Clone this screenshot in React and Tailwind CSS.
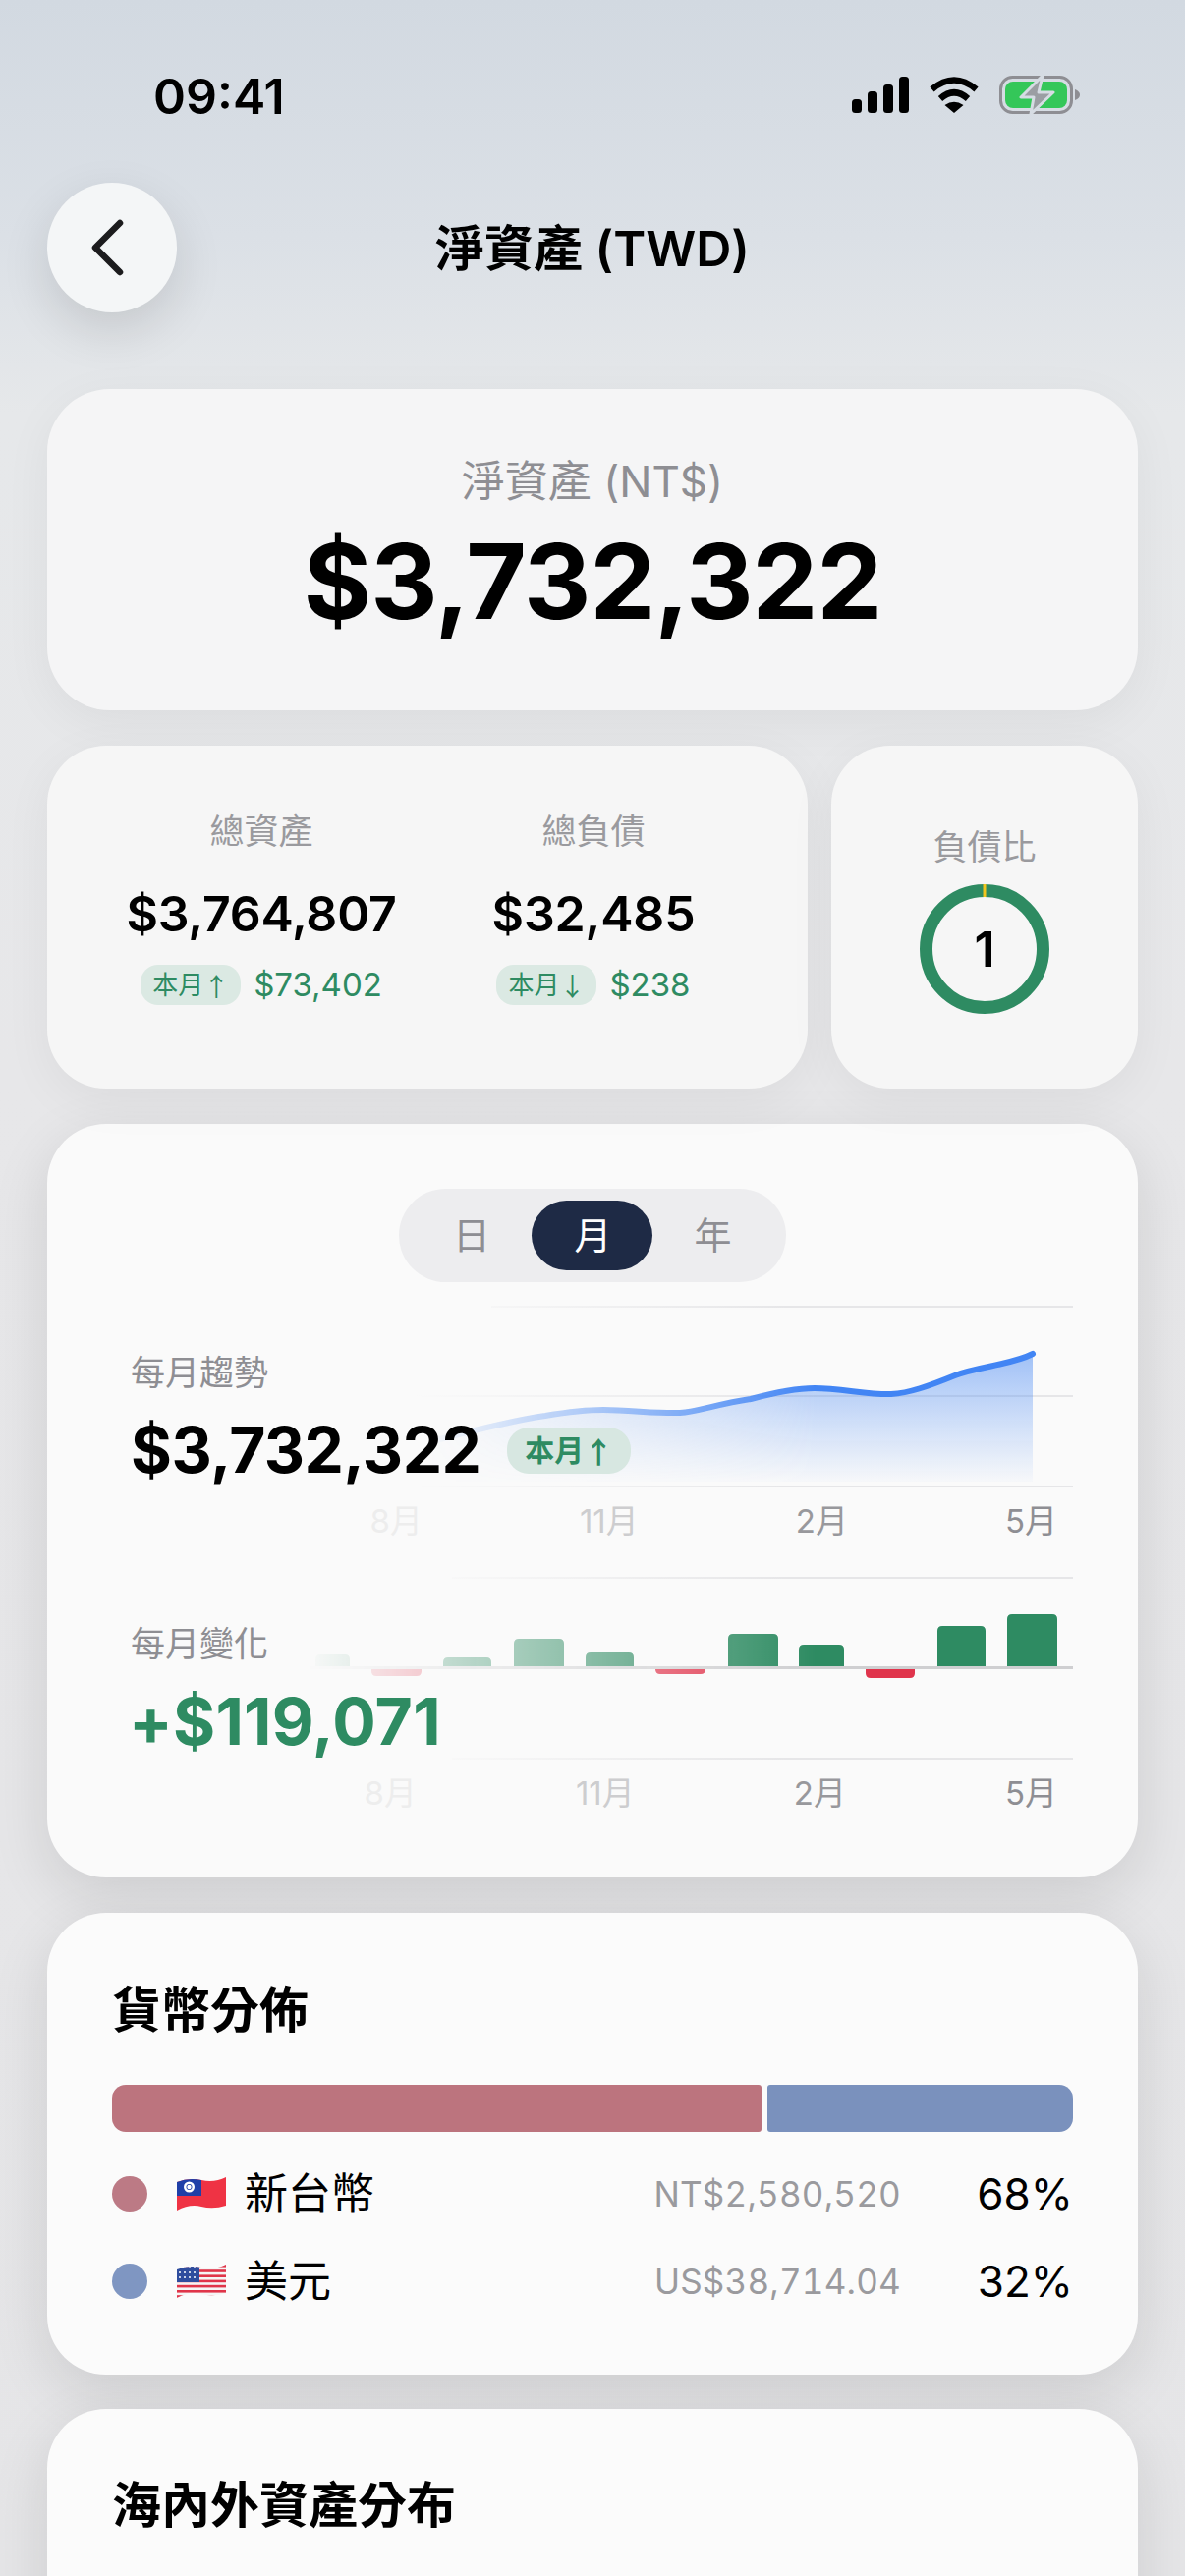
const GREEN = '#2e8b62'

function StatusIcons() {
  return (
    <div className="flex items-center gap-[21px]">
      <svg width="58" height="37" viewBox="0 0 58 37" fill="#000">
        <rect x="0" y="23" width="10" height="14" rx="3.5" />
        <rect x="16" y="15" width="10" height="22" rx="3.5" />
        <rect x="32" y="8" width="10" height="29" rx="3.5" />
        <rect x="48" y="0" width="10" height="37" rx="3.5" />
      </svg>
      <svg width="50" height="37" viewBox="0 0 50 37">
        <path d="M2.5 13 Q25 -6 47.5 13" fill="none" stroke="#000" strokeWidth="6.5" />
        <path d="M11 22.5 Q25 10 39 22.5" fill="none" stroke="#000" strokeWidth="6.5" />
        <path d="M15.5 29 Q25 22.5 34.5 29 L25 37 Z" fill="#000" />
      </svg>
      <svg width="82" height="39" viewBox="0 0 82 39">
        <rect x="1.5" y="1.5" width="72" height="36" rx="12" fill="none" stroke="#8e8e93" strokeWidth="3" />
        <rect x="6" y="6" width="63" height="27" rx="8" fill="#34c759" />
        <path d="M77 14 Q82 16 82 19.5 Q82 23 77 25 Z" fill="#8e8e93" />
        <path d="M44 0 L22 22 L35 22 L32 39 L55 17 L40 17 Z" fill="#9b9ea3" stroke="#d6dce3" strokeWidth="3" strokeLinejoin="round" />
      </svg>
    </div>
  )
}

function Arrow({ children }) {
  return <span className="font-['Noto_Sans_CJK_TC',sans-serif]">{children}</span>
}

function Trend({ arrow, amount }) {
  return (
    <div className="mt-[22px] flex items-center justify-center gap-[13px]">
      <span className="flex h-[41px] w-[102px] items-center justify-center rounded-[18px] bg-[#dbe9e3] text-[26px] text-[#2e8b62]">本月<Arrow>{arrow}</Arrow></span>
      <span className="text-[33px] leading-[41px] text-[#2e8b62]">{amount}</span>
    </div>
  )
}

function Stat({ label, value, arrow, amount }) {
  return (
    <div className="flex flex-col items-center">
      <span className="text-[35px] leading-[50px] text-[#9a9a9e]">{label}</span>
      <span className="mt-[29px] text-[50px] leading-[60px] font-semibold tracking-[-0.2px] text-black">{value}</span>
      <Trend arrow={arrow} amount={amount} />
    </div>
  )
}

function DebtRing() {
  return (
    <div className="relative mt-[13px] flex h-[132px] w-[132px] items-center justify-center">
      <svg className="absolute inset-0" width="132" height="132" viewBox="0 0 132 132">
        <circle cx="66" cy="66" r="59.5" fill="none" stroke={GREEN} strokeWidth="13" />
        <rect x="64.5" y="0" width="3" height="13" fill="#f2c51d" />
      </svg>
      <span className="text-[50px] font-semibold text-black">1</span>
    </div>
  )
}

function Segmented() {
  return (
    <div className="mx-auto flex h-[95px] w-[394px] items-center rounded-[48px] bg-[#ededef] text-[38px] text-[#8e8e93]">
      <span className="w-[135px] pl-[13px] text-center">日</span>
      <span className="flex h-[71px] w-[123px] items-center justify-center rounded-[36px] bg-[#1e2a45] pl-[2px] text-white">月</span>
      <span className="w-[136px] pr-[13px] text-center">年</span>
    </div>
  )
}

function GridLines({ ys, startX }) {
  return ys.map((y, i) => (
    <line key={y} x1={startX[i]} x2="1092" y1={y} y2={y} stroke="url(#gridFade)" strokeWidth="2" />
  ))
}

function LineChart() {
  const line = 'M440 1467 C470 1459 520 1446 555 1441 C585 1436 600 1435 614 1435 C640 1435 670 1439 692 1438 C710 1437 730 1429 764 1424 C790 1417 810 1413 829 1413 C855 1413 885 1420 907 1419 C925 1418 945 1411 972 1400 C995 1391 1030 1389 1051 1378'
  return (
    <svg className="absolute inset-0" width="959" height="185" viewBox="133 1329 959 185">
      <defs>
        <linearGradient id="gridFade" gradientUnits="userSpaceOnUse" x1="420" x2="800" y1="0" y2="0">
          <stop offset="0" stopColor="#e6e6e8" stopOpacity="0" />
          <stop offset="1" stopColor="#e6e6e8" />
        </linearGradient>
        <linearGradient id="areaFill" x1="0" x2="0" y1="0" y2="1">
          <stop offset="0" stopColor="#4285f4" stopOpacity="0.48" />
          <stop offset="1" stopColor="#4285f4" stopOpacity="0.02" />
        </linearGradient>
        <linearGradient id="lineFade" gradientUnits="userSpaceOnUse" x1="430" x2="830" y1="0" y2="0">
          <stop offset="0" stopColor="#fff" stopOpacity="0" />
          <stop offset="1" stopColor="#fff" />
        </linearGradient>
        <mask id="lineMask" maskUnits="userSpaceOnUse" x="133" y="1329" width="959" height="185">
          <rect x="133" y="1329" width="959" height="185" fill="url(#lineFade)" />
        </mask>
      </defs>
      <GridLines ys={[1330, 1421, 1514]} startX={[500, 420, 420]} />
      <g mask="url(#lineMask)">
        <path d={line + ' L1051 1508 L440 1508 Z'} fill="url(#areaFill)" />
        <path d={line} fill="none" stroke="#4285f4" strokeWidth="6" strokeLinecap="round" />
      </g>
    </svg>
  )
}

const BARS = [
  [321, 356, 1684, 1697, '#2e8b62'],
  [378, 429, 1697, 1706, '#e0344c'],
  [451, 500, 1687, 1697, '#2e8b62'],
  [523, 574, 1668, 1697, '#2e8b62'],
  [596, 645, 1682, 1697, '#2e8b62'],
  [667, 718, 1697, 1704, '#e0344c'],
  [741, 792, 1663, 1697, '#2e8b62'],
  [813, 859, 1674, 1697, '#2e8b62'],
  [881, 931, 1697, 1708, '#e0344c'],
  [954, 1003, 1655, 1697, '#2e8b62'],
  [1025, 1076, 1643, 1697, '#2e8b62'],
]

function BarChart() {
  return (
    <svg className="absolute inset-0" width="959" height="187" viewBox="133 1605 959 187">
      <defs>
        <linearGradient id="barFade" gradientUnits="userSpaceOnUse" x1="310" x2="830" y1="0" y2="0">
          <stop offset="0" stopColor="#fff" stopOpacity="0" />
          <stop offset="1" stopColor="#fff" />
        </linearGradient>
        <mask id="barMask" maskUnits="userSpaceOnUse" x="133" y="1605" width="959" height="187">
          <rect x="133" y="1605" width="959" height="187" fill="url(#barFade)" />
        </mask>
      </defs>
      <GridLines ys={[1606, 1790]} startX={[460, 460]} />
      <g mask="url(#barMask)">
        {BARS.map(([x1, x2, y1, y2, color]) => {
          const r = 5
          const up = y2 === 1697
          const d = up
            ? `M${x1} ${y2} V${y1 + r} Q${x1} ${y1} ${x1 + r} ${y1} H${x2 - r} Q${x2} ${y1} ${x2} ${y1 + r} V${y2} Z`
            : `M${x1} ${y1} V${y2 - r} Q${x1} ${y2} ${x1 + r} ${y2} H${x2 - r} Q${x2} ${y2} ${x2} ${y2 - r} V${y1} Z`
          return <path key={x1} d={d} fill={color} />
        })}
        <rect x="310" y="1696" width="782" height="3" fill="#cfcfd1" />
      </g>
    </svg>
  )
}

function MonthAxis({ gapClass, mt }) {
  return (
    <div className={`flex h-[40px] items-center justify-end pr-[82px] text-[33px] leading-[40px] ${gapClass} ${mt}`}>
      <span className="text-[#ededed]">8月</span>
      <span className="text-[#cdcdcf]">11月</span>
      <span className="text-[#98989c]">2月</span>
      <span className="text-[#8e8e93]">5月</span>
    </div>
  )
}

function FlagTW() {
  return (
    <svg width="50" height="34" viewBox="0 0 50 34">
      <defs>
        <clipPath id="waveTW"><path d="M0 5 Q12 0 25 3 T50 0 V29 Q37 33 25 30 T0 34 Z" /></clipPath>
      </defs>
      <g clipPath="url(#waveTW)">
        <rect width="50" height="34" fill="#ef3344" />
        <rect width="25" height="19" fill="#1f3fa8" />
        <circle cx="12.5" cy="10" r="5.5" fill="#fff" />
        <circle cx="12.5" cy="10" r="3" fill="#1f3fa8" />
        <circle cx="12.5" cy="10" r="2.2" fill="#fff" />
      </g>
    </svg>
  )
}

function FlagUS() {
  const stripes = [0, 1, 2, 3, 4, 5, 6]
  return (
    <svg width="50" height="34" viewBox="0 0 50 34">
      <defs>
        <clipPath id="waveUS"><path d="M0 5 Q12 0 25 3 T50 0 V29 Q37 33 25 30 T0 34 Z" /></clipPath>
      </defs>
      <g clipPath="url(#waveUS)">
        <rect width="50" height="34" fill="#f5f5f5" />
        {stripes.map(i => <rect key={i} y={i * 5.2} width="50" height="2.6" fill="#e0354a" />)}
        <rect width="23" height="18" fill="#2f4d9e" />
        {[3, 8, 13].map(y => [3, 8, 13, 18].map(x => <circle key={x + '-' + y} cx={x} cy={y} r="1" fill="#fff" />))}
      </g>
    </svg>
  )
}

function CurrencyRow({ dot, flag, name, amount, pct }) {
  return (
    <div className="flex h-[60px] items-center">
      <span className={`h-[36px] w-[36px] rounded-full ${dot}`} />
      <span className="ml-[30px]">{flag}</span>
      <span className="ml-[19px] flex-1 text-[44px] text-black">{name}</span>
      <span className="text-[35px] tracking-[0.2px] text-[#9a9a9e] tabular-nums">{amount}</span>
      <span className="w-[175px] text-right text-[44px] text-black">{pct}</span>
    </div>
  )
}

export default function App() {
  return (
    <div className="h-[2622px] w-[1206px] overflow-hidden bg-[linear-gradient(180deg,#d2d9e1_0px,#dbe0e6_240px,#e6e8ea_420px,#e7e7e9_1100px,#e5e5e7_2622px)] px-[48px] font-['Inter','Noto_Sans_CJK_TC',sans-serif]">
      <div className="flex h-[186px] items-start justify-between pl-[108px] pr-[59px] pt-[72px]">
        <span className="text-[50px] leading-[52px] font-semibold text-black">09:41</span>
        <div className="pt-[5px]"><StatusIcons /></div>
      </div>

      <div className="grid h-[132px] grid-cols-[132px_1fr_132px] items-center">
        <button className="flex h-[132px] w-[132px] items-center justify-center rounded-full bg-[#f4f6f7] shadow-[0_18px_50px_rgba(0,0,0,0.12)]">
          <svg width="36" height="60" viewBox="0 0 36 60" className="mr-[11px]">
            <path d="M31 5 L6 30 L31 55" fill="none" stroke="#1c1c1e" strokeWidth="6.5" strokeLinecap="round" strokeLinejoin="round" />
          </svg>
        </button>
        <h1 className="pt-[2px] text-center text-[50px] font-semibold text-black">淨資產 (TWD)</h1>
      </div>

      <div className="mt-[78px] flex h-[327px] flex-col items-center rounded-[64px] bg-[#f5f5f6] pt-[64px] shadow-[0_12px_50px_rgba(0,0,0,0.05)]">
        <span className="text-[44px] leading-[60px] text-[#8e8e93]">淨資產 (NT$)</span>
        <span className="mt-[12px] text-[106px] leading-[120px] font-bold tracking-[-1px] text-black">$3,732,322</span>
      </div>

      <div className="mt-[36px] flex h-[349px] gap-[24px]">
        <div className="grid w-[774px] grid-cols-2 rounded-[60px] bg-[#f6f6f6] px-[49px] pt-[62px] shadow-[0_12px_50px_rgba(0,0,0,0.05)]">
          <Stat label="總資產" value="$3,764,807" arrow="↑" amount="$73,402" />
          <Stat label="總負債" value="$32,485" arrow="↓" amount="$238" />
        </div>
        <div className="flex flex-1 flex-col items-center rounded-[60px] bg-[#f6f6f6] pt-[78px] shadow-[0_12px_50px_rgba(0,0,0,0.05)]">
          <span className="text-[35px] leading-[50px] text-[#9a9a9e]">負債比</span>
          <DebtRing />
        </div>
      </div>

      <div className="mt-[36px] h-[767px] rounded-[60px] bg-[#fafafa] pt-[66px] shadow-[0_18px_60px_rgba(0,0,0,0.11)]">
        <Segmented />

        <div className="relative ml-[85px] mt-[24px] h-[185px] w-[959px]">
          <LineChart />
          <div className="relative pt-[44px]">
            <div className="text-[35px] leading-[48px] text-[#8e8e93]">每月趨勢</div>
            <div className="mt-[19px] flex items-center gap-[27px]">
              <span className="text-[64px] leading-[72px] font-bold tracking-[-0.5px] text-black">$3,732,322</span>
              <span className="flex h-[47px] w-[126px] items-center justify-center rounded-[22px] bg-[#d7e7e1] text-[30px] font-semibold text-[#2e8b62]">本月<Arrow>↑</Arrow></span>
            </div>
          </div>
        </div>
        <MonthAxis gapClass="gap-[160px]" mt="mt-[14px]" />

        <div className="relative ml-[85px] mt-[37px] h-[187px] w-[959px]">
          <BarChart />
          <div className="relative pt-[44px]">
            <div className="text-[35px] leading-[48px] text-[#8e8e93]">每月變化</div>
            <div className="-ml-[2px] mt-[19px] text-[66px] leading-[72px] font-bold tracking-[0.2px] text-[#2e8b62]">+$119,071</div>
          </div>
        </div>
        <MonthAxis gapClass="gap-[162px]" mt="mt-[13px]" />
      </div>

      <div className="mt-[36px] h-[470px] rounded-[60px] bg-[#fbfbfb] px-[66px] pt-[64px] shadow-[0_18px_60px_rgba(0,0,0,0.11)]">
        <h2 className="text-[50px] leading-[70px] font-semibold text-black">貨幣分佈</h2>
        <div className="mt-[41px] flex h-[48px] gap-[6px]">
          <div className="w-[661px] rounded-l-[14px] rounded-r-[3px] bg-[#bc747e]" />
          <div className="flex-1 rounded-l-[3px] rounded-r-[14px] bg-[#7a91bd]" />
        </div>
        <div className="mt-[33px] flex flex-col gap-[29px]">
          <CurrencyRow dot="bg-[#bc7a85]" flag={<FlagTW />} name="新台幣" amount="NT$2,580,520" pct="68%" />
          <CurrencyRow dot="bg-[#7f96c2]" flag={<FlagUS />} name="美元" amount="US$38,714.04" pct="32%" />
        </div>
      </div>

      <div className="mt-[35px] h-[400px] rounded-[60px] bg-[#fbfbfb] px-[66px] pt-[63px] shadow-[0_18px_60px_rgba(0,0,0,0.11)]">
        <h2 className="text-[50px] leading-[70px] font-semibold text-black">海內外資產分布</h2>
      </div>
    </div>
  )
}
